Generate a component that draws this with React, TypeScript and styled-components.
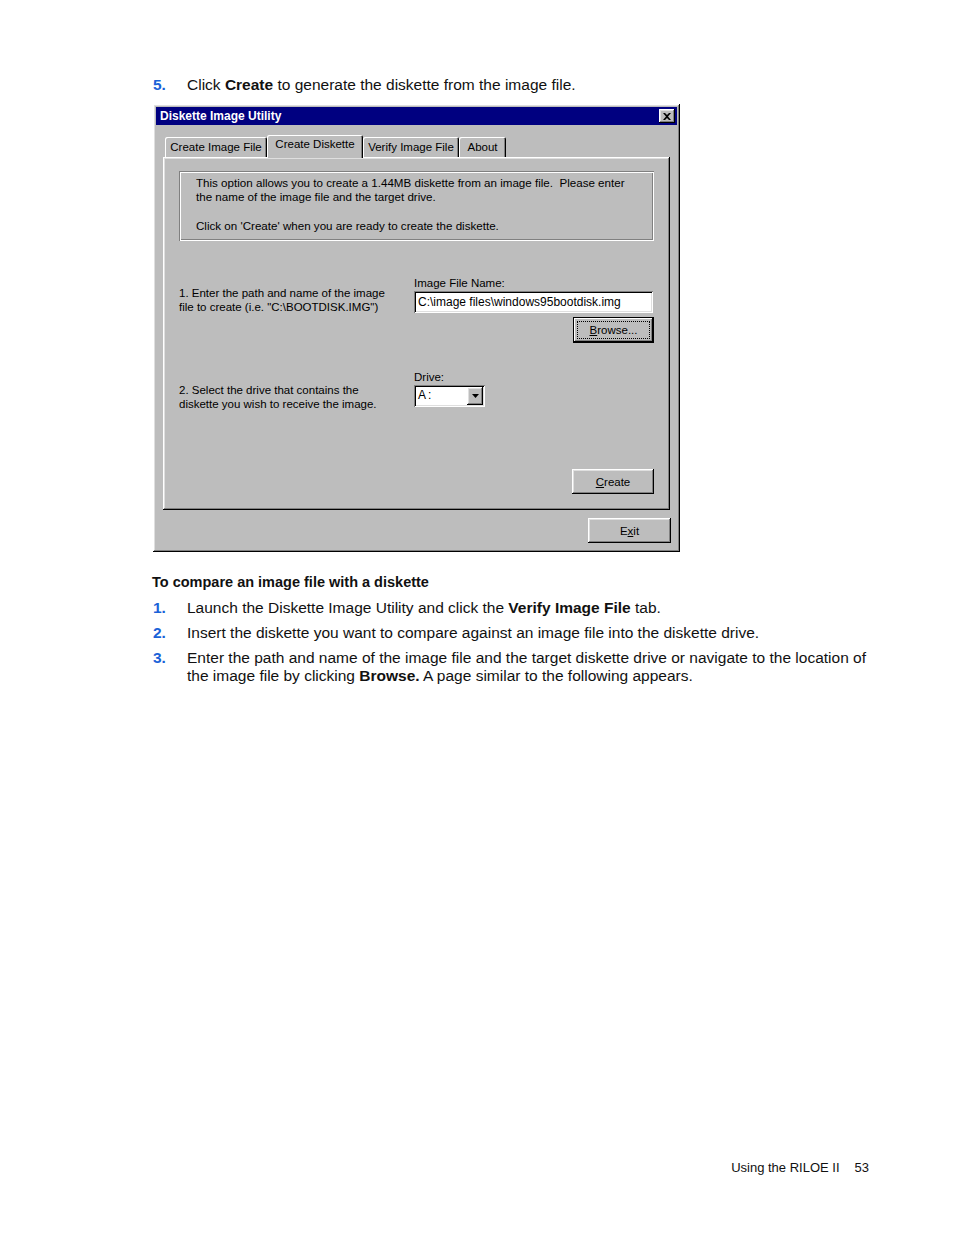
import styled, { createGlobalStyle, css } from 'styled-components'

const GlobalStyle = createGlobalStyle`
  body {
    margin: 0;
    background: #fff;
  }
`;

const raised = css`
  box-shadow: inset -1px -1px #000, inset 1px 1px #fff, inset -2px -2px #808080, inset 2px 2px #dfdfdf;
`;

const sunken = css`
  box-shadow: inset 1px 1px #808080, inset -1px -1px #fff, inset 2px 2px #000, inset -2px -2px #dfdfdf;
`;

const App = () => (
  <>
    <GlobalStyle />
    <Page>
      <Step>
        <Num>5.</Num>
        <StepText>Click <b>Create</b> to generate the diskette from the image file.</StepText>
      </Step>

      <Window>
        <TitleBar>
          <Title>Diskette Image Utility</Title>
          <CloseBox>
            <svg width="8" height="7" viewBox="0 0 8 7">
              <path d="M0 0h2l2 2 2-2h2L5 3.5 8 7H6L4 5 2 7H0l3-3.5z" fill="#000" />
            </svg>
          </CloseBox>
        </TitleBar>

        <Body>
          <Tabs>
            <Tab $w={102}>Create Image File</Tab>
            <Tab $w={96} $active>Create Diskette</Tab>
            <Tab $w={96}>Verify Image File</Tab>
            <Tab $w={47}>About</Tab>
          </Tabs>

          <Panel>
            <InfoBox>
              <p>
                This option allows you to create a 1.44MB diskette from an image file.&nbsp; Please enter
                the name of the image file and the target drive.
              </p>
              <p>Click on 'Create' when you are ready to create the diskette.</p>
            </InfoBox>

            <FieldRow $top={36}>
              <Note $drop={-1}>
                1. Enter the path and name of the image<br />
                file to create (i.e. "C:\BOOTDISK.IMG")
              </Note>
              <Field>
                <Label>Image File Name:</Label>
                <TextBox>C:\image files\windows95bootdisk.img</TextBox>
              </Field>
            </FieldRow>
            <ButtonRow $top={4}>
              <Button $w={81} $h={26} $default>
                <Focus><u>B</u>rowse...</Focus>
              </Button>
            </ButtonRow>

            <FieldRow $top={28}>
              <Note $drop={-4}>
                2. Select the drive that contains the<br />
                diskette you wish to receive the image.
              </Note>
              <Field>
                <Label>Drive:</Label>
                <Combo>
                  <ComboText>A:</ComboText>
                  <ComboArrow>
                    <svg width="7" height="4" viewBox="0 0 7 4">
                      <path d="M0 0h7L3.5 4z" fill="#000" />
                    </svg>
                  </ComboArrow>
                </Combo>
              </Field>
            </FieldRow>

            <ButtonRow $top={62}>
              <Button $w={82} $h={25}><u>C</u>reate</Button>
            </ButtonRow>
          </Panel>

          <ButtonRow $top={8} $right={-1}>
            <Button $w={83} $h={25}>E<u>x</u>it</Button>
          </ButtonRow>
        </Body>
      </Window>

      <Heading>To compare an image file with a diskette</Heading>
      <List>
        <Step>
          <Num>1.</Num>
          <StepText>Launch the Diskette Image Utility and click the <b>Verify Image File</b> tab.</StepText>
        </Step>
        <Step>
          <Num>2.</Num>
          <StepText>Insert the diskette you want to compare against an image file into the diskette drive.</StepText>
        </Step>
        <Step>
          <Num>3.</Num>
          <StepText>
            Enter the path and name of the image file and the target diskette drive or navigate to the location of<br />
            the image file by clicking <b>Browse.</b> A page similar to the following appears.
          </StepText>
        </Step>
      </List>

      <Footer>
        <span>Using the RILOE II</span>
        <span>53</span>
      </Footer>
    </Page>
  </>
);

const Page = styled.div`
  width: 954px;
  min-height: 1235px;
  box-sizing: border-box;
  padding: 76px 85px 58px 153px;
  display: flex;
  flex-direction: column;
  font-family: "Liberation Sans", Arial, sans-serif;
  font-size: 15.5px;
  line-height: 18px;
  color: #111;
`;

const Step = styled.div`
  display: flex;
`;

const Num = styled.span`
  flex: 0 0 34px;
  color: #1a62d8;
  font-weight: bold;
`;

const StepText = styled.span`
  flex: 1;
  white-space: nowrap;
  b {
    font-weight: bold;
  }
`;

const Window = styled.div`
  margin-top: 10px;
  width: 527px;
  height: 448px;
  box-sizing: border-box;
  padding: 3px;
  background: #bdbdbd;
  ${raised};
  font-family: "Liberation Sans", Arial, sans-serif;
  font-size: 11px;
  line-height: 14px;
  color: #000;
`;

const TitleBar = styled.div`
  height: 18px;
  background: #000080;
  display: flex;
  align-items: center;
  justify-content: space-between;
  padding: 0 2px 0 4px;
`;

const Title = styled.span`
  color: #fff;
  font-weight: bold;
  font-size: 12px;
`;

const CloseBox = styled.span`
  width: 16px;
  height: 14px;
  background: #bdbdbd;
  ${raised};
  display: flex;
  align-items: center;
  justify-content: center;
`;

const Body = styled.div`
  padding: 10px 7px 0;
  display: flex;
  flex-direction: column;
`;

const Tabs = styled.div`
  display: flex;
  align-items: flex-end;
  height: 22px;
  padding-left: 2px;
`;

const Tab = styled.div<{ $w: number; $active?: boolean }>`
  width: ${p => p.$w}px;
  height: ${p => (p.$active ? 23 : 20)}px;
  box-sizing: border-box;
  display: flex;
  justify-content: center;
  padding-top: ${p => (p.$active ? 2 : 3)}px;
  margin-bottom: ${p => (p.$active ? -1 : 0)}px;
  background: #bdbdbd;
  border-radius: 2px 2px 0 0;
  position: relative;
  z-index: ${p => (p.$active ? 2 : 0)};
  box-shadow: inset 1px 1px #fff, inset -1px 0 #000, inset -2px 0 #808080;
  font-size: 11.5px;
`;

const Panel = styled.div`
  height: 353px;
  box-sizing: border-box;
  padding: 14px 16px 0 16px;
  ${raised};
  display: flex;
  flex-direction: column;
`;

const InfoBox = styled.div`
  height: 70px;
  box-sizing: border-box;
  padding: 5px 17px;
  box-shadow: inset 1px 1px #808080, inset -1px -1px #fff, inset 2px 2px #fff, inset -2px -2px #808080;
  font-size: 11.6px;
  p {
    margin: 0 0 15px;
  }
`;

const FieldRow = styled.div<{ $top: number }>`
  margin-top: ${p => p.$top}px;
  display: flex;
  align-items: flex-end;
`;

const Note = styled.div<{ $drop: number }>`
  flex: 0 0 235px;
  font-size: 11.5px;
  margin-bottom: ${p => p.$drop}px;
`;

const Field = styled.div`
  display: flex;
  flex-direction: column;
  gap: 1px;
  font-size: 11.5px;
`;

const Label = styled.span`
  line-height: 13px;
`;

const TextBox = styled.div`
  width: 239px;
  height: 22px;
  box-sizing: border-box;
  padding: 3px 4px;
  background: #fff;
  ${sunken};
  font-size: 12px;
  line-height: 16px;
`;

const Combo = styled.div`
  width: 71px;
  height: 22px;
  box-sizing: border-box;
  padding: 2px;
  background: #fff;
  ${sunken};
  display: flex;
`;

const ComboText = styled.span`
  flex: 1;
  padding: 1px 2px;
  font-size: 12px;
  letter-spacing: 2px;
`;

const ComboArrow = styled.span`
  width: 16px;
  background: #bdbdbd;
  ${raised};
  display: flex;
  align-items: center;
  justify-content: center;
`;

const ButtonRow = styled.div<{ $top: number; $right?: number }>`
  margin-top: ${p => p.$top}px;
  margin-right: ${p => p.$right ?? 0}px;
  display: flex;
  justify-content: flex-end;
`;

const Button = styled.div<{ $w: number; $h: number; $default?: boolean }>`
  width: ${p => p.$w}px;
  height: ${p => p.$h}px;
  box-sizing: border-box;
  display: flex;
  align-items: center;
  justify-content: center;
  background: #bdbdbd;
  font-size: 11.5px;
  ${p =>
    p.$default
      ? css`
          box-shadow: inset 0 0 0 1px #000, inset -2px -2px #000, inset 2px 2px #fff, inset -3px -3px #808080;
        `
      : raised};
`;

const Focus = styled.span`
  width: calc(100% - 10px);
  height: calc(100% - 10px);
  display: flex;
  align-items: center;
  justify-content: center;
  outline: 1px dotted #000;
`;

const Heading = styled.h2`
  margin: 21px 0 0 -1px;
  font-size: 14.5px;
  line-height: 18px;
  font-weight: bold;
`;

const List = styled.div`
  margin-top: 8px;
  display: flex;
  flex-direction: column;
  gap: 7px;
`;

const Footer = styled.div`
  margin-top: auto;
  align-self: flex-end;
  display: flex;
  gap: 15px;
  font-size: 13px;
`;

export default App;
